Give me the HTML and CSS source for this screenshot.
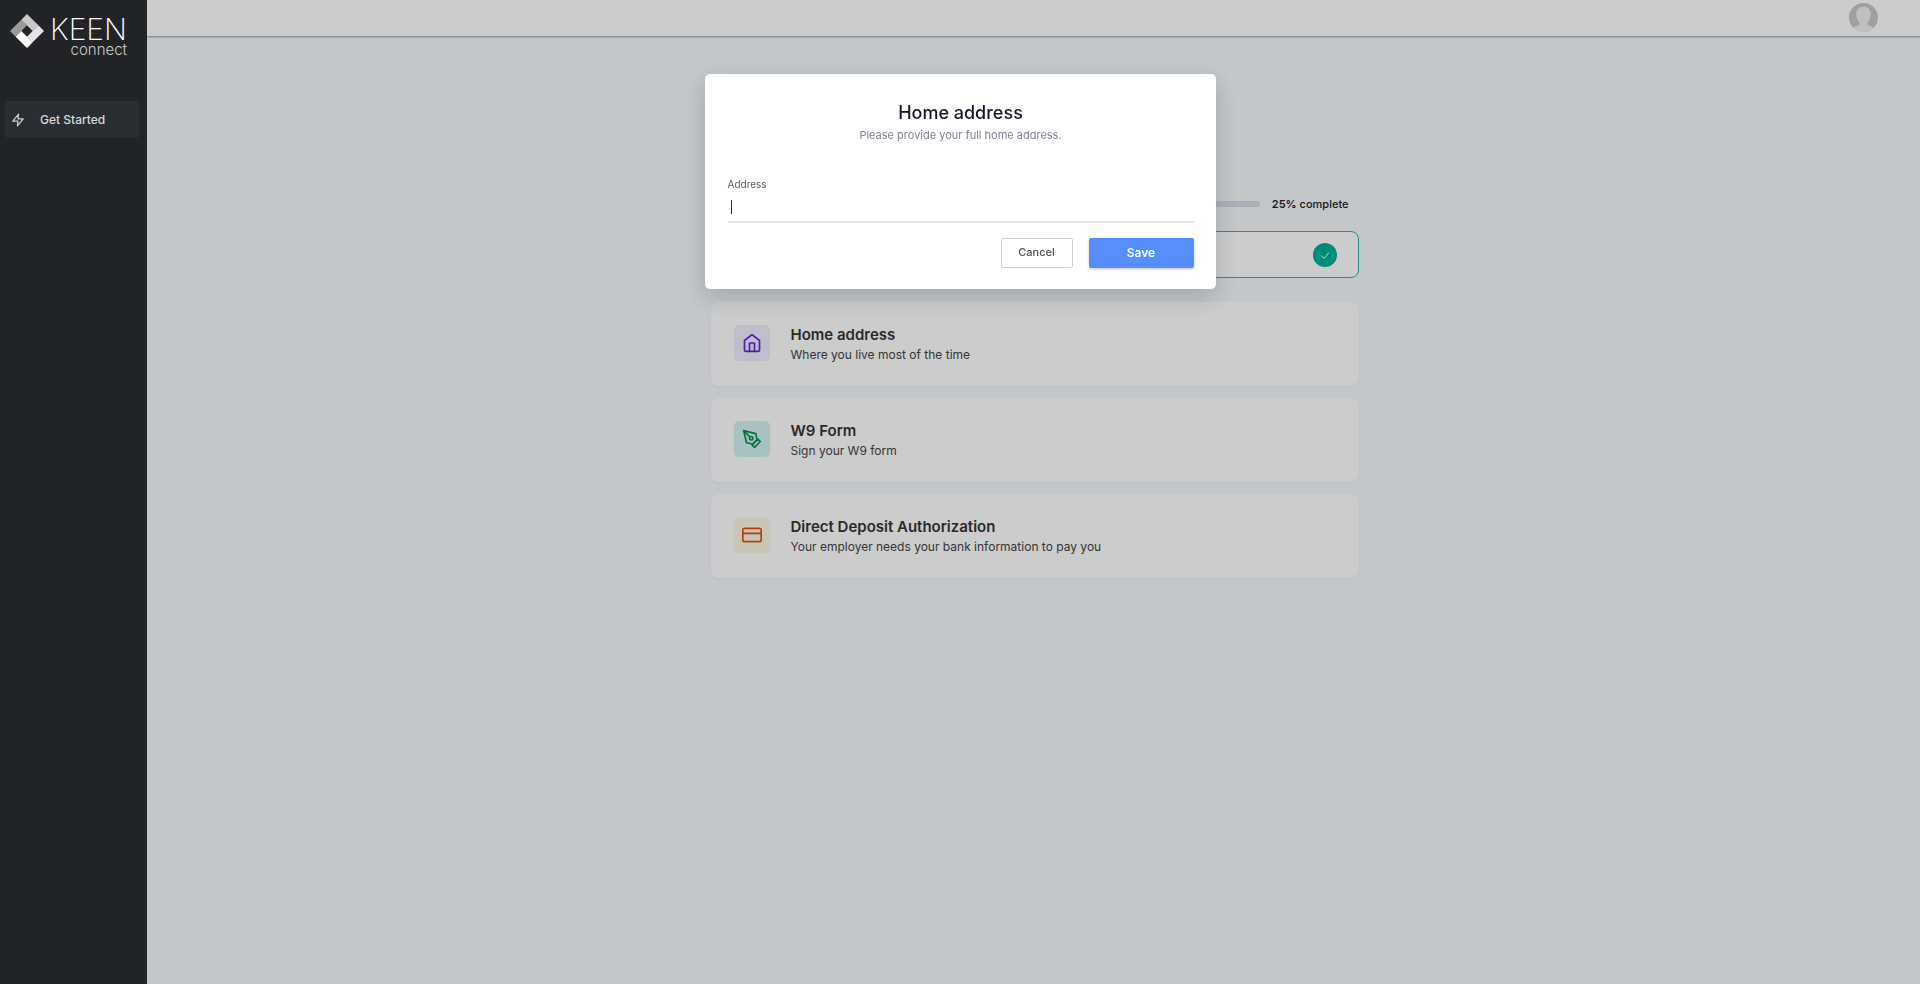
FILE: index.html
```
<!DOCTYPE html>
<html lang="en">
<head>
    <meta charset="utf-8">
    <title>KEEN connect - Get Started</title>
    <link rel="stylesheet" href="styles.css">
</head>
<body>
    <div class="app">
        <aside class="sidebar">
            <a class="logo" href="#">
                <svg class="logo-mark" viewBox="0 0 34 34" aria-hidden="true">
                    <path d="M11.300 5.700L17 11.300 5.700 22.700 0 17z" fill="#9b9b9b"/>
                    <path d="M17 0l11.300 11.300-5.600 5.700L11.300 5.700z" fill="#c9c9c9"/>
                    <path d="M28.300 11.300L34 17 22.700 28.300 17 22.700z" fill="#e4e4e4"/>
                    <path d="M11.300 17l11.400 11.300L17 34 5.700 22.700z" fill="#fff"/>
                </svg>
                <span class="logo-text">
                    <span class="logo-name">KEEN</span>
                    <span class="logo-sub">connect</span>
                </span>
            </a>
            <nav>
                <a class="nav-item" href="#">
                    <svg class="nav-icon" viewBox="0 0 24 24" aria-hidden="true">
                        <path d="M13 2L3 14h9l-1 8 10-12h-9l1-8z"/>
                    </svg>
                    Get Started
                </a>
            </nav>
        </aside>
        <div class="page">
            <header class="topbar">
                <button class="avatar" type="button" aria-label="Account">
                    <svg viewBox="0 0 28 28" aria-hidden="true">
                        <circle cx="14" cy="14" r="14" fill="#c8c8c8"/>
                        <path d="M4 24C6 22 10 22 10.500 20 10.500 18.500 7 16 7 11 7 6 10 3.500 14 3.500S21 6 21 11c0 5-3.500 7.500-3.500 9 .5 2 4.500 2 6.500 4a14 14 0 0 1-20 0z" fill="#f0f0f0"/>
                    </svg>
                </button>
            </header>
            <main class="content">
                <div class="progress-row">
                    <div class="progress"><div class="progress-bar" style="width: 25%"></div></div>
                    <span class="progress-text"><b>25%</b> complete</span>
                </div>
                <div class="card-done">
                    <span class="check">
                        <svg viewBox="0 0 24 24" aria-hidden="true"><path d="M8 12.500l3 3 5-6"/></svg>
                    </span>
                </div>
                <div class="cards">
                    <a class="card" href="#">
                        <span class="card-icon purple">
                            <svg viewBox="0 0 24 24" aria-hidden="true">
                                <path d="M3 9l9-7 9 7v11a2 2 0 0 1-2 2H5a2 2 0 0 1-2-2z"/>
                                <path d="M9 22V12h6v10"/>
                            </svg>
                        </span>
                        <span class="card-text">
                            <span class="card-title">Home address</span>
                            <span class="card-sub">Where you live most of the time</span>
                        </span>
                    </a>
                    <a class="card" href="#">
                        <span class="card-icon green">
                            <svg viewBox="0 0 24 24" aria-hidden="true">
                                <path d="M12 19l7-7 3 3-7 7-3-3z"/>
                                <path d="M18 13l-1.500-7.500L2 2l3.500 14.500L13 18l5-5z"/>
                                <path d="M2 2l7.586 7.586"/>
                                <circle cx="11" cy="11" r="2"/>
                            </svg>
                        </span>
                        <span class="card-text">
                            <span class="card-title">W9 Form</span>
                            <span class="card-sub">Sign your W9 form</span>
                        </span>
                    </a>
                    <a class="card" href="#">
                        <span class="card-icon orange">
                            <svg viewBox="0 0 24 24" aria-hidden="true">
                                <rect x="1" y="4" width="22" height="16" rx="2"/>
                                <path d="M1 10h22"/>
                            </svg>
                        </span>
                        <span class="card-text">
                            <span class="card-title">Direct Deposit Authorization</span>
                            <span class="card-sub">Your employer needs your bank information to pay you</span>
                        </span>
                    </a>
                </div>
            </main>
        </div>
    </div>

    <div class="backdrop">
        <form class="modal" role="dialog" aria-labelledby="modal-title">
            <h2 id="modal-title">Home address</h2>
            <p>Please provide your full home address.</p>
            <label for="address">Address</label>
            <input type="text" id="address" autofocus>
            <div class="modal-actions">
                <button class="btn btn-cancel" type="button">Cancel</button>
                <button class="btn btn-save" type="submit">Save</button>
            </div>
        </form>
    </div>
</body>
</html>
```
FILE: styles.css
```
* { box-sizing: border-box; }
body {
    margin: 0;
    font-family: Inter, "Liberation Sans", sans-serif;
    font-size: 13px;
    color: #343434;
    background: #f4f9fd;
}
a { color: inherit; text-decoration: none; }
button { font-family: inherit; cursor: pointer; }
svg { display: block; }

.app { display: flex; min-height: 100vh; }

/* sidebar stays above the modal backdrop */
.sidebar {
    position: relative;
    z-index: 20;
    width: 147px;
    flex-shrink: 0;
    padding: 5px 8px 0 5px;
    background: #212529;
}
.logo {
    display: flex;
    align-items: flex-start;
    gap: 6px;
    height: 63px;
    margin: 0 0 33px 3px;
    padding: 9px 5px 0 2px;
    background: #222428;
    color: #fff;
}
.logo-mark { width: 34px; height: 34px; }
.logo-text {
    display: flex;
    flex-direction: column;
    align-items: flex-end;
}
.logo-name { font-size: 30px; line-height: 30px; font-weight: 200; }
.logo-sub { font-size: 15px; line-height: 12px; font-weight: 300; color: #ccc; }
.nav-item {
    display: flex;
    align-items: center;
    gap: 15px;
    height: 37px;
    padding-left: 6px;
    border-radius: 3px;
    background: #2a2e32;
    color: #d6d8da;
    font-size: 12px;
    font-weight: 500;
}
.nav-icon {
    width: 14px;
    height: 14px;
    fill: none;
    stroke: #ced4da;
    stroke-width: 2;
    stroke-linejoin: round;
}

.page { flex: 1; }
.topbar {
    display: flex;
    justify-content: flex-end;
    height: 36px;
    padding: 3px 42px 0 0;
    background: #fff;
    box-shadow: 0 1px 2px rgba(0, 0, 0, 0.4);
}
.avatar {
    width: 29px;
    height: 29px;
    padding: 0;
    border: 0;
    border-radius: 50%;
    background: none;
}
.content {
    max-width: 650px;
    margin: 0 auto;
    padding: 158px 0 0 2px;
}
.progress-row {
    display: flex;
    align-items: center;
    gap: 12px;
    height: 20px;
    padding-right: 10px;
    margin-bottom: 17px;
}
.progress {
    flex: 1;
    height: 6px;
    border-radius: 3px;
    background: #d7dae6;
    overflow: hidden;
}
.progress-bar { height: 100%; background: #00a896; }
.progress-text { font-size: 11px; font-weight: 500; color: #222; }
.progress-text b { font-weight: 600; }
.card-done {
    display: flex;
    align-items: center;
    justify-content: flex-end;
    height: 47px;
    padding-right: 21px;
    border: 1px solid #2eb5a5;
    border-radius: 8px;
    background: #fff;
}
.check {
    width: 24px;
    height: 24px;
    border-radius: 50%;
    background: #00b09d;
}
.check svg { fill: none; stroke: #fff; stroke-width: 1; }
.cards {
    display: flex;
    flex-direction: column;
    gap: 12px;
    margin-top: 24px;
}
.card {
    display: flex;
    align-items: flex-start;
    gap: 21px;
    padding: 23px 23px 21px;
    border-radius: 8px;
    background: #fff;
    box-shadow: 0 1px 2px rgba(0, 0, 0, 0.05);
}
.card-icon {
    display: flex;
    align-items: center;
    justify-content: center;
    width: 36px;
    height: 36px;
    border-radius: 5px;
}
.card-icon svg {
    width: 20px;
    height: 20px;
    fill: none;
    stroke: currentColor;
    stroke-width: 2;
    stroke-linecap: round;
    stroke-linejoin: round;
}
.purple { background: #efebff; color: #6423e0; }
.green { background: #d3f3f5; color: #009352; }
.orange { background: #fdf6e3; color: #dd5014; }
.card-text { display: flex; flex-direction: column; }
.card-title { font-size: 15px; line-height: 20px; font-weight: 600; }
.card-sub { font-size: 12px; line-height: 20px; color: #444; }

.backdrop {
    position: fixed;
    inset: 0;
    z-index: 10;
    padding-top: 74px;
    background: rgba(0, 0, 0, 0.2);
}
.modal {
    max-width: 511px;
    margin: 0 auto;
    padding: 27px 22px 21px 23px;
    border-radius: 5px;
    background: #fff;
    box-shadow: 0 8px 24px rgba(20, 30, 50, 0.2);
}
.modal h2 {
    margin: 0;
    font-size: 18px;
    line-height: 24px;
    font-weight: 500;
    text-align: center;
    color: #111827;
}
.modal p {
    margin: 0 0 32px;
    font-size: 11px;
    line-height: 20px;
    text-align: center;
    color: #7b8190;
}
.modal label {
    display: block;
    font-size: 10px;
    line-height: 14px;
    color: #555b66;
}
.modal input {
    display: block;
    width: 100%;
    height: 32px;
    padding: 0 3px;
    border: 0;
    border-bottom: 2px solid #e2e6ec;
    outline: none;
    font: inherit;
    color: #343434;
}
.modal input:placeholder-shown,
.modal input:focus {
    caret-color: transparent;
    background: linear-gradient(#343434, #343434) 3px 9px / 1px 14px no-repeat;
}
.modal-actions {
    display: flex;
    justify-content: flex-end;
    gap: 16px;
    margin-top: 15px;
}
.btn {
    height: 30px;
    padding: 0 0 2px;
    font-size: 12px;
    border-radius: 2px;
}
.btn-cancel {
    width: 72px;
    border: 1px solid #ced0d4;
    background: #fff;
    color: #4b5058;
    font-size: 11px;
    font-weight: 500;
}
.btn-save {
    width: 105px;
    border: 0;
    background: #558efb;
    color: #fff;
    font-weight: 600;
    box-shadow: 0 1px 3px rgba(0, 0, 0, 0.25);
}
```
